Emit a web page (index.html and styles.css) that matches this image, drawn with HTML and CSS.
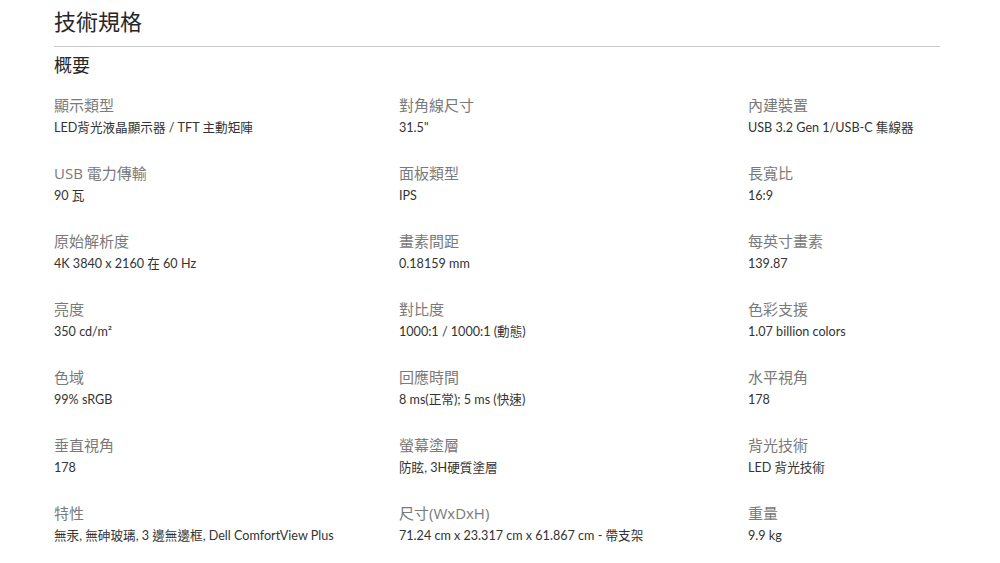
FILE: index.html
```html
<!DOCTYPE html>
<html lang="zh-Hant">
<head>
<meta charset="utf-8">
<title>技術規格</title>
<link rel="stylesheet" href="styles.css">
</head>
<body>
<div class="page">
  <h1 class="title">技術規格</h1>
  <h2 class="subtitle">概要</h2>
  <div class="specs">
    <div class="spec"><div class="label">顯示類型</div><div class="value">LED背光液晶顯示器 / TFT 主動矩陣</div></div>
    <div class="spec"><div class="label">對角線尺寸</div><div class="value">31.5"</div></div>
    <div class="spec"><div class="label">內建裝置</div><div class="value">USB 3.2 Gen 1/USB-C 集線器</div></div>

    <div class="spec"><div class="label">USB 電力傳輸</div><div class="value">90 瓦</div></div>
    <div class="spec"><div class="label">面板類型</div><div class="value">IPS</div></div>
    <div class="spec"><div class="label">長寬比</div><div class="value">16:9</div></div>

    <div class="spec"><div class="label">原始解析度</div><div class="value">4K 3840 x 2160 在 60 Hz</div></div>
    <div class="spec"><div class="label">畫素間距</div><div class="value">0.18159 mm</div></div>
    <div class="spec"><div class="label">每英寸畫素</div><div class="value">139.87</div></div>

    <div class="spec"><div class="label">亮度</div><div class="value">350 cd/m²</div></div>
    <div class="spec"><div class="label">對比度</div><div class="value">1000:1 / 1000:1 (動態)</div></div>
    <div class="spec"><div class="label">色彩支援</div><div class="value">1.07 billion colors</div></div>

    <div class="spec"><div class="label">色域</div><div class="value">99% sRGB</div></div>
    <div class="spec"><div class="label">回應時間</div><div class="value">8 ms(正常); 5 ms (快速)</div></div>
    <div class="spec"><div class="label">水平視角</div><div class="value">178</div></div>

    <div class="spec"><div class="label">垂直視角</div><div class="value">178</div></div>
    <div class="spec"><div class="label">螢幕塗層</div><div class="value">防眩, 3H硬質塗層</div></div>
    <div class="spec"><div class="label">背光技術</div><div class="value">LED 背光技術</div></div>

    <div class="spec"><div class="label">特性</div><div class="value">無汞, 無砷玻璃, 3 邊無邊框, Dell ComfortView Plus</div></div>
    <div class="spec"><div class="label">尺寸(WxDxH)</div><div class="value">71.24 cm x 23.317 cm x 61.867 cm - 帶支架</div></div>
    <div class="spec"><div class="label">重量</div><div class="value">9.9 kg</div></div>
  </div>
</div>
</body>
</html>
```

FILE: styles.css
```css
html, body {
  margin: 0;
  padding: 0;
  background: #ffffff;
}
.page {
  padding: 5px 0 0 54px;
  font-family: "Noto Sans CJK TC", "Noto Sans", sans-serif;
}
.title {
  width: 886px;
  margin: 0;
  font-size: 22px;
  line-height: 30px;
  font-weight: 400;
  color: #262626;
  padding-bottom: 11px;
  border-bottom: 1px solid #c8c8c8;
}
.subtitle {
  margin: 5px 0 0 0;
  font-size: 18px;
  line-height: 24px;
  font-weight: 400;
  color: #262626;
}
.specs {
  margin-top: 19px;
  display: grid;
  grid-template-columns: 345px 349px 1fr;
  row-gap: 26px;
}
.spec {
  display: flex;
  flex-direction: column;
  gap: 4px;
}
.label {
  font-family: "Open Sans", "Noto Sans CJK TC", sans-serif;
  font-size: 15px;
  line-height: 20px;
  color: #7a7a7a;
}
.value {
  font-family: "Lato", "Noto Sans CJK TC", sans-serif;
  font-size: 12.6px;
  line-height: 18px;
  color: #333333;
}
```
